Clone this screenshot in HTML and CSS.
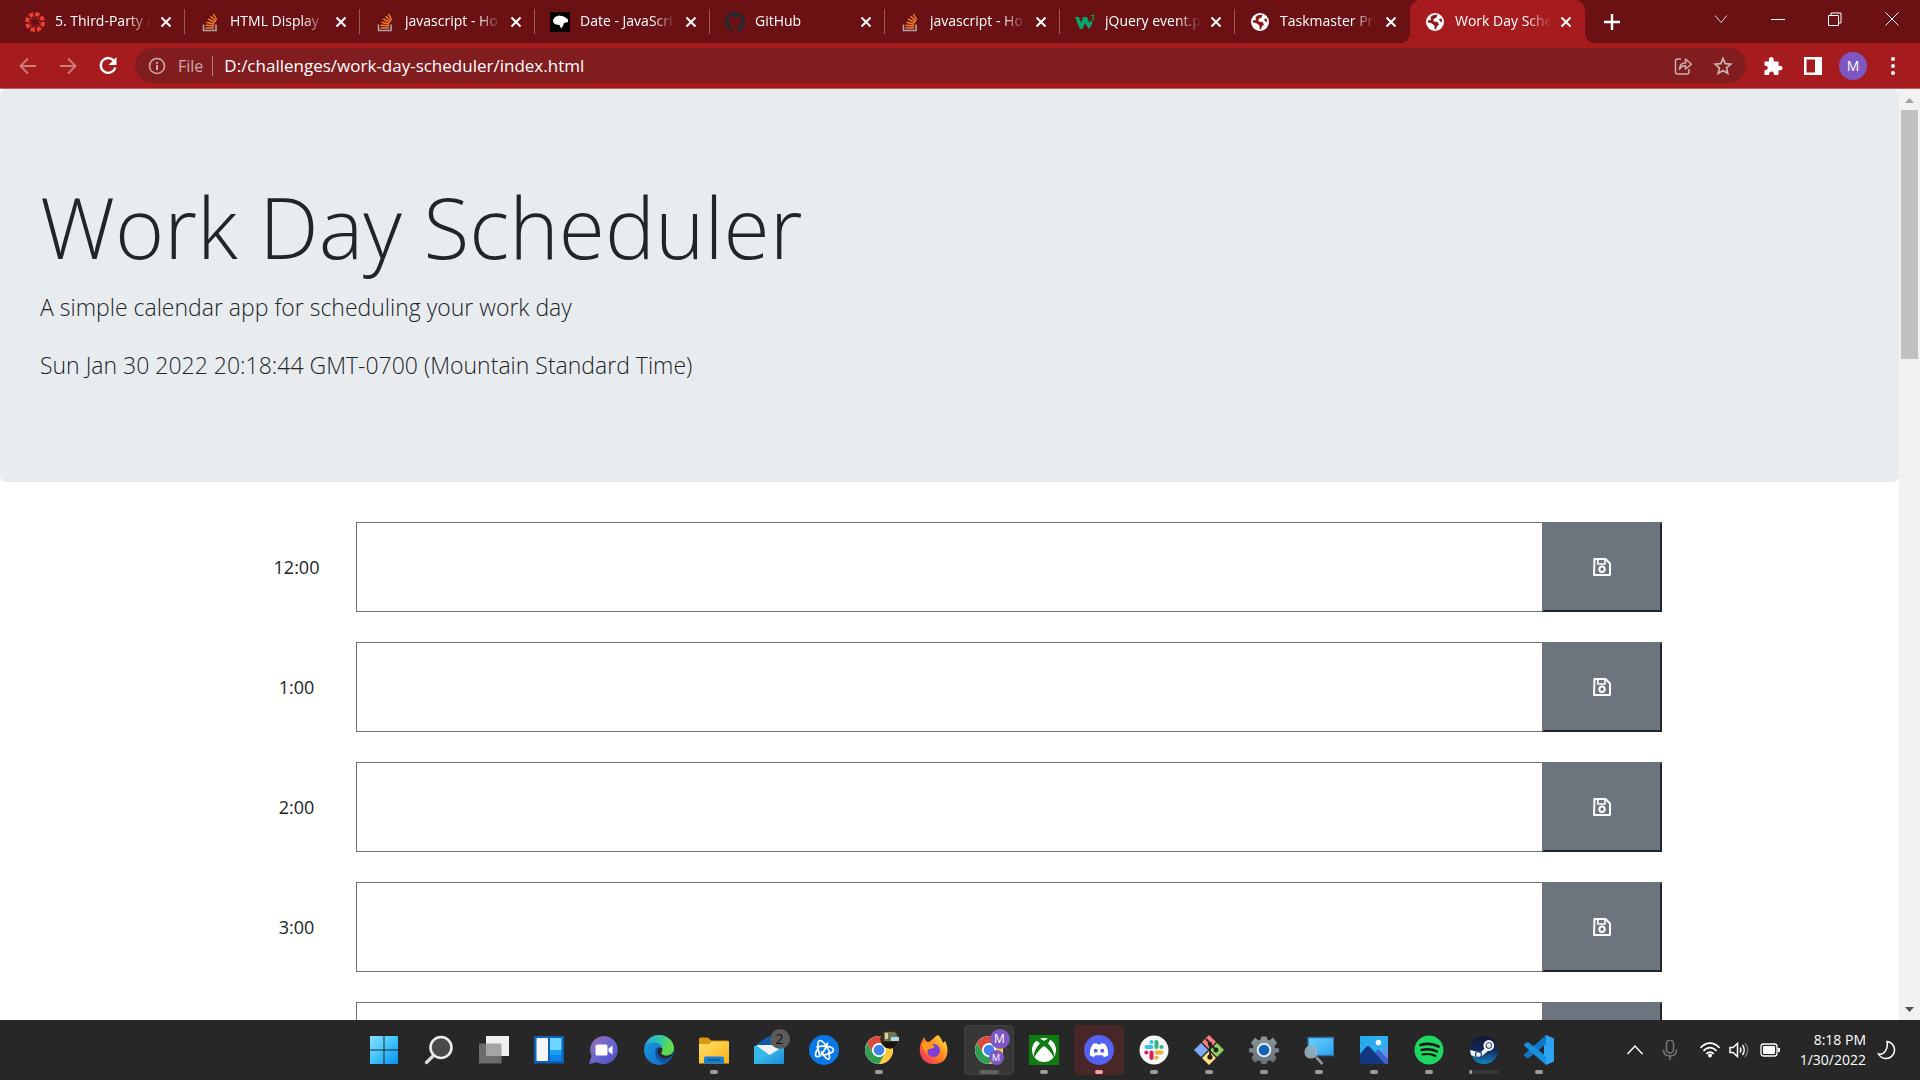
FILE: index.html
```html
<!DOCTYPE html>
<html lang="en">
<head>
<meta charset="utf-8">
<title>Work Day Scheduler</title>
<link rel="stylesheet" href="styles.css">
</head>
<body>
<svg class="defs" aria-hidden="true">
  <defs>
    <linearGradient id="winG" x1="0" y1="0" x2="1" y2="1"><stop offset="0" stop-color="#8ce0ff"/><stop offset=".5" stop-color="#3fc3fb"/><stop offset="1" stop-color="#0a8df5"/></linearGradient>
    <linearGradient id="chatG" x1="0" y1="0" x2="1" y2="1"><stop offset="0" stop-color="#a06cb4"/><stop offset=".5" stop-color="#6a67d0"/><stop offset="1" stop-color="#4a4fc0"/></linearGradient>
    <linearGradient id="edgeA" x1="0" y1="0" x2="1" y2="1"><stop offset="0" stop-color="#1c9de0"/><stop offset="1" stop-color="#0b65c2"/></linearGradient>
    <linearGradient id="edgeB" x1="0" y1="0" x2="1" y2="0"><stop offset="0" stop-color="#2aa9e0"/><stop offset=".5" stop-color="#2fc5a8"/><stop offset="1" stop-color="#6be04a"/></linearGradient>
    <linearGradient id="foldG" x1="0" y1="0" x2="1" y2="1"><stop offset="0" stop-color="#ffdc6e"/><stop offset="1" stop-color="#fbb512"/></linearGradient>
    <linearGradient id="mailG" x1="0" y1="0" x2="1" y2="1"><stop offset="0" stop-color="#50d4f5"/><stop offset="1" stop-color="#1a8ad8"/></linearGradient>
    <linearGradient id="foxG" x1="1" y1="0" x2="0" y2="1"><stop offset="0" stop-color="#fff04a"/><stop offset=".45" stop-color="#ff8a1e"/><stop offset="1" stop-color="#f0206a"/></linearGradient>
    <linearGradient id="steamG" x1="0" y1="0" x2="0" y2="1"><stop offset="0" stop-color="#14152e"/><stop offset=".5" stop-color="#12285a"/><stop offset="1" stop-color="#1288c4"/></linearGradient>
    <linearGradient id="monG" x1="0" y1="0" x2="1" y2="1"><stop offset="0" stop-color="#6cd0fb"/><stop offset="1" stop-color="#2aa2f4"/></linearGradient>
    <linearGradient id="picG" x1="0" y1="0" x2="1" y2="1"><stop offset="0" stop-color="#25a8ea"/><stop offset=".6" stop-color="#2fb0ee"/><stop offset="1" stop-color="#9a6ad8"/></linearGradient>
    <linearGradient id="gearG" x1="0" y1="0" x2="0" y2="1"><stop offset="0" stop-color="#8d959d"/><stop offset="1" stop-color="#646c74"/></linearGradient>
    <symbol id="x" viewBox="0 0 12 12"><path d="M1.500 1.500 10.500 10.500M10.500 1.500 1.500 10.500" stroke="#fff" stroke-width="2"/></symbol>
    <symbol id="so" viewBox="0 0 20 20"><path d="M3.500 12.500V18.500H16V12.500" fill="none" stroke="#a8a8ac" stroke-width="1.600"/><path d="M5.500 16H14M5.700 13.200 14 14M6.500 10.200 14.300 12.200M8.200 7 15 10.700M10.700 4.300 16 9.500M13.500 2 16.700 8" stroke="#f08030" stroke-width="1.500"/></symbol>
    <symbol id="globe" viewBox="0 0 20 20"><circle cx="10" cy="10" r="9" fill="#fff"/><path d="M8 3.200 12.500 2.500 11.500 5.500 8.500 7 8.500 9.500 12.500 10 14 12.500 12 14.500 10.800 17.500 9.500 17 9.500 13.500 6 11 3 10.500 2.700 8.500 6 8 5.500 5ZM14 7 16.500 6.500 17.300 10 15 9.500Z" fill="#8c1818"/></symbol>
    <symbol id="save" viewBox="0 0 18 18"><path d="M1.500 1H12.500L17 5.500V17H1Z" fill="none" stroke="#fff" stroke-width="2" stroke-linejoin="round"/><path d="M4.800 1.500V6H12V1.500" fill="none" stroke="#fff" stroke-width="1.600"/><circle cx="9" cy="11.300" r="2.700" fill="none" stroke="#fff" stroke-width="2"/></symbol>
    <symbol id="chrome" viewBox="0 0 30 30"><circle cx="15" cy="15" r="14" fill="#fff"/><path d="M2.900 8A14 14 0 0 1 27.100 8H15A7 7 0 0 0 9 18.500Z" fill="#dc4a3c"/><path d="M27.100 8A14 14 0 0 1 15 29L21 18.500A7 7 0 0 0 15 8Z" fill="#fcc934"/><path d="M15 29A14 14 0 0 1 2.900 8L9 18.500A7 7 0 0 0 21 18.500Z" fill="#2f9e51"/><circle cx="15" cy="15" r="6.700" fill="#fff"/><circle cx="15" cy="15" r="5.300" fill="#3f84ee"/></symbol>
  </defs>
</svg>

<header class="browser">
  <div class="tabstrip">
    <nav class="tabs" aria-label="Tabs">
      <div class="tab"><svg class="fav" viewBox="0 0 20 20"><circle cx="10" cy="10" r="8" fill="none" stroke="#ef3f30" stroke-width="4" stroke-dasharray="4.300 1.983"/><g fill="#ef3f30"><circle cx="10" cy="5.300" r=".8"/><circle cx="10" cy="14.700" r=".8"/><circle cx="5.300" cy="10" r=".8"/><circle cx="14.700" cy="10" r=".8"/><circle cx="6.700" cy="6.700" r=".8"/><circle cx="13.300" cy="13.300" r=".8"/><circle cx="6.700" cy="13.300" r=".8"/><circle cx="13.300" cy="6.700" r=".8"/></g></svg><a class="title" href="#">5. Third-Party A</a><button class="close" aria-label="Close tab"><svg><use href="#x"/></svg></button></div>
      <div class="tab"><svg class="fav"><use href="#so"/></svg><a class="title" href="#">HTML Display</a><button class="close" aria-label="Close tab"><svg><use href="#x"/></svg></button></div>
      <div class="tab"><svg class="fav"><use href="#so"/></svg><a class="title" href="#">javascript - Ho</a><button class="close" aria-label="Close tab"><svg><use href="#x"/></svg></button></div>
      <div class="tab"><svg class="fav" viewBox="0 0 20 20"><path d="M0 0H20V20H0Z"/><path d="M3 8 5 5 9 3.500 14 4.500 18 7.500V10L14 11 13 14 11 16.500 9.500 13 6 12.500 3.500 11Z" fill="#fff"/></svg><a class="title" href="#">Date - JavaScri</a><button class="close" aria-label="Close tab"><svg><use href="#x"/></svg></button></div>
      <div class="tab"><svg class="fav" viewBox="0 0 16 16"><path fill="#24292f" d="M8 0C3.580 0 0 3.580 0 8c0 3.540 2.290 6.530 5.470 7.590.4.070.55-.17.55-.38 0-.19-.01-.82-.01-1.490-2.010.37-2.530-.49-2.690-.94-.09-.23-.48-.94-.82-1.130-.28-.15-.68-.52-.01-.53.63-.01 1.080.58 1.230.82.72 1.210 1.870.87 2.330.66.070-.52.28-.87.51-1.070-1.780-.2-3.640-.89-3.640-3.950 0-.87.31-1.590.82-2.150-.08-.2-.36-1.020.08-2.120 0 0 .67-.21 2.200.82a7.600 7.600 0 0 1 4 0c1.530-1.040 2.200-.82 2.200-.82.44 1.100.16 1.920.08 2.120.51.56.82 1.270.82 2.150 0 3.070-1.870 3.750-3.650 3.950.29.25.54.73.54 1.480 0 1.070-.01 1.930-.01 2.200 0 .21.15.46.55.38A8 8 0 0 0 16 8c0-4.420-3.580-8-8-8z"/></svg><a class="title" href="#">GitHub</a><button class="close" aria-label="Close tab"><svg><use href="#x"/></svg></button></div>
      <div class="tab"><svg class="fav"><use href="#so"/></svg><a class="title" href="#">javascript - Ho</a><button class="close" aria-label="Close tab"><svg><use href="#x"/></svg></button></div>
      <div class="tab"><svg class="fav" viewBox="0 0 20 20"><path d="M0 5H4L6 11 8 5H12L14.500 11 16 8.500 17.500 11 14 17 10 11 7.500 17H5Z" fill="#04aa6d"/><path d="M16 3.500H19L17.500 5.300Q19.300 5.500 19 7.200 17.700 9 16 7.500" fill="none" stroke="#04aa6d"/></svg><a class="title" href="#">jQuery event.p</a><button class="close" aria-label="Close tab"><svg><use href="#x"/></svg></button></div>
      <div class="tab"><svg class="fav"><use href="#globe"/></svg><a class="title" href="#">Taskmaster Pro</a><button class="close" aria-label="Close tab"><svg><use href="#x"/></svg></button></div>
      <div class="tab active"><svg class="fav"><use href="#globe"/></svg><a class="title" href="#" aria-current="page">Work Day Sche</a><button class="close" aria-label="Close tab"><svg><use href="#x"/></svg></button></div>
    </nav>
    <button class="newtab" aria-label="New tab"><svg width="16" height="16" viewBox="0 0 16 16"><path d="M8 0V16M0 8H16" stroke="#fff" stroke-width="2.400"/></svg></button>
    <div class="winctl">
      <button aria-label="Search tabs"><svg viewBox="0 0 14 14"><path d="M1 3.500 7 10.500 13 3.500" fill="none" stroke="#fff" stroke-width="1" opacity=".8"/></svg></button>
      <button aria-label="Minimize"><svg viewBox="0 0 14 14"><path d="M0 7.500H14" stroke="#fff"/></svg></button>
      <button aria-label="Restore"><svg viewBox="0 0 14 14"><path d="M.5 3.500H10.500V13.500H.5ZM3 3V1H13V11H11" fill="none" stroke="#fff"/></svg></button>
      <button aria-label="Close"><svg viewBox="0 0 14 14"><path d="M.5 .5 13.500 13.500M13.500 .5 .5 13.500" stroke="#fff"/></svg></button>
    </div>
  </div>
  <div class="toolbar">
    <button class="tool dim" aria-label="Back"><svg viewBox="0 0 20 20"><path d="M18 10H3M10 2.500 2.500 10 10 17.500" fill="none" stroke="currentColor" stroke-width="1.800"/></svg></button>
    <button class="tool dim" aria-label="Forward"><svg viewBox="0 0 20 20"><path d="M2 10H17M10 2.500 17.500 10 10 17.500" fill="none" stroke="currentColor" stroke-width="1.800"/></svg></button>
    <button class="tool" aria-label="Reload"><svg viewBox="0 0 20 20"><path d="M16.500 5.500A7.400 7.400 0 1 0 17.300 11.500" fill="none" stroke="#fff" stroke-width="2.300"/><path d="M18.500 1V9H10.500Z" fill="#fff"/></svg></button>
    <div class="omnibox">
      <svg class="info" viewBox="0 0 18 18"><circle cx="9" cy="9" r="7.500" fill="none" stroke="currentColor" stroke-width="1.600"/><path d="M9 8V13M9 5V6.800" stroke="currentColor" stroke-width="2"/></svg>
      <label class="scheme" for="url">File</label>
      <input id="url" class="url" type="text" value="D:/challenges/work-day-scheduler/index.html">
      <button class="tool soft" aria-label="Share"><svg viewBox="0 0 20 20"><path d="M8 3H4.500Q2.500 3 2.500 5V16Q2.500 18 4.500 18H14Q16 18 16 16V13M6.500 13.500C6.500 8.500 9 7 12.500 7V3L18.500 8.200 12.500 13V9.700C9.500 9.700 7.500 11 6.500 13.500Z" fill="none" stroke="currentColor" stroke-width="1.500" stroke-linejoin="round"/></svg></button>
      <button class="tool soft" aria-label="Bookmark"><svg viewBox="0 0 20 20"><path d="M10 2.500 12.200 7.700 17.800 8.200 13.600 11.900 14.800 17.400 10 14.500 5.200 17.400 6.400 11.900 2.200 8.200 7.800 7.700Z" fill="none" stroke="currentColor" stroke-width="1.700"/></svg></button>
    </div>
    <button class="tool" aria-label="Extensions"><svg viewBox="0 0 20 20"><path d="M1.500 5.500H6Q5.300 1 8.300 1 11.300 1 10.600 5.500H15.500V9.800Q19.500 9.200 19.500 12 19.500 14.800 15.500 14.200V19H11Q11 15.500 8.500 15.500 6 15.500 6 19H1.500V14.300Q4.800 14 4.800 12 4.800 9.800 1.500 9.600Z" fill="#fff"/></svg></button>
    <button class="tool" aria-label="Side panel"><svg viewBox="0 0 20 20"><path d="M1 1H19V19H1ZM3.500 3.500V16.500H12V3.500Z" fill="#fff" fill-rule="evenodd"/></svg></button>
    <button class="tool" aria-label="Profile"><span class="avatar">M</span></button>
    <button class="tool" aria-label="Menu"><svg viewBox="0 0 20 20" fill="#fff"><circle cx="10" cy="3" r="2"/><circle cx="10" cy="10" r="2"/><circle cx="10" cy="17" r="2"/></svg></button>
  </div>
</header>

<div class="viewport">
  <main class="page">
    <section class="jumbotron">
      <h1>Work Day Scheduler</h1>
      <p>A simple calendar app for scheduling your work day</p>
      <p>Sun Jan 30 2022 20:18:44 GMT-0700 (Mountain Standard Time)</p>
    </section>
    <div class="container">
      <div class="row"><label for="h12">12:00</label><textarea id="h12"></textarea><button class="save" aria-label="Save"><svg><use href="#save"/></svg></button></div>
      <div class="row"><label for="h1">1:00</label><textarea id="h1"></textarea><button class="save" aria-label="Save"><svg><use href="#save"/></svg></button></div>
      <div class="row"><label for="h2">2:00</label><textarea id="h2"></textarea><button class="save" aria-label="Save"><svg><use href="#save"/></svg></button></div>
      <div class="row"><label for="h3">3:00</label><textarea id="h3"></textarea><button class="save" aria-label="Save"><svg><use href="#save"/></svg></button></div>
      <div class="row"><label for="h4">4:00</label><textarea id="h4"></textarea><button class="save" aria-label="Save"><svg><use href="#save"/></svg></button></div>
    </div>
  </main>
  <div class="scrollbar" aria-hidden="true">
    <svg viewBox="0 0 21 21"><path d="M6 14 10.500 9 15 14Z" fill="#a3a3a3"/></svg>
    <div class="track"><div class="thumb"></div></div>
    <svg viewBox="0 0 21 21"><path d="M6 8 10.500 13 15 8Z" fill="#505050"/></svg>
  </div>
</div>

<footer class="taskbar">
  <div class="apps">
    <button class="app" aria-label="Start"><svg viewBox="0 0 30 30"><path d="M1 1H14.500V14.500H1ZM15.500 1H29V14.500H15.500ZM1 15.500H14.500V29H1ZM15.500 15.500H29V29H15.500Z" fill="url(#winG)"/></svg></button>
    <button class="app" aria-label="Search"><svg viewBox="0 0 30 30"><path d="M9.500 20.500 2.500 27.500" stroke="#ddd" stroke-width="3.200" stroke-linecap="round"/><circle cx="17" cy="12.500" r="10.500" fill="#4a4a4a" stroke="#ececec" stroke-width="2.600"/></svg></button>
    <button class="app" aria-label="Task view"><svg viewBox="0 0 30 30"><path d="M7 1H30V21H7Z" fill="#f0f0f0"/><path d="M0 8.500H22.500V28.500H0Z" fill="#888" opacity=".72"/></svg></button>
    <button class="app" aria-label="Widgets"><svg viewBox="0 0 30 30"><path d="M0 1H30V28.500H0Z" fill="#0b62b8"/><rect x="2.500" y="3" width="11.500" height="23" rx="1" fill="#f5f5f5"/><path d="M16 3H27.500V15H16Z" fill="#6cd6ff"/><path d="M16 15H27.500V20.500H16Z" fill="#1aa0f5"/><path d="M16 20.500H27.500V26H16Z" fill="#0c84ea"/></svg></button>
    <button class="app" aria-label="Chat"><svg viewBox="0 0 30 30"><path d="M15 1A14 14 0 1 1 8 27.200L0 29 2.500 21A14 14 0 0 1 15 1Z" fill="url(#chatG)"/><rect x="6.500" y="9.500" width="12" height="11" rx="1.500" fill="#fff"/><path d="M19.500 13.500 23.500 10.500V19.500L19.500 16.500Z" fill="#fff"/></svg></button>
    <button class="app" aria-label="Edge"><svg viewBox="0 0 30 30"><circle cx="15" cy="15" r="15" fill="url(#edgeA)"/><path d="M1 10C4 3 9 0 15 0 23 0 30 6 30 13 30 18 26.500 20.500 22.500 20.500 19.500 20.500 17.500 19.500 17.500 18 17.500 17 19 16 18.500 13.500 18 10 14 7.500 9.500 7.500 5 7.500 2 9 1 10Z" fill="url(#edgeB)"/><path d="M13 12C9 16 12 28 21 28 24 27 27 24 28 22 22 26 13.500 22 13 12Z" fill="#114f9f"/><path d="M14.500 12.500C12 15 13.500 21 19 23 23 24 26 23 28.500 20.500L30 15 22.500 20.500C19.500 20.500 17.500 19.500 17.500 18 18.500 17 19 15 18 13Z" fill="#272727"/><path d="M18 12C20 14 17.500 16.500 17.500 18 17.500 19.500 19.500 20.500 22.500 20.500 26.500 20.500 30 18 30 13L25 8Z" fill="#5dd852"/></svg></button>
    <button class="app open" aria-label="File Explorer"><svg viewBox="0 0 30 30"><path d="M0 4.500Q0 2.500 1.500 2.500H9L12 5.500H28Q30 5.500 30 7V12H0Z" fill="#d9990c"/><path d="M0 9H10L12.500 6.500H30V28.500H0Z" fill="url(#foldG)"/><path d="M5 28.500V23Q5 21.500 6.500 21.500H23.500Q25 21.500 25 23V28.500Z" fill="#1580d4"/><path d="M9 25H21" stroke="#0b4f93" stroke-width="1.500"/></svg></button>
    <button class="app" aria-label="Mail, 2 new"><svg viewBox="0 0 30 30"><path d="M0 11 15 1 30 11V29H0Z" fill="#0e5ba6"/><path d="M3 10H27V20H3Z" fill="#f2f2f2"/><path d="M0 11 15 20.500 30 11V29H0Z" fill="url(#mailG)"/><path d="M0 29 15 19.500 3 11 0 11Z" fill="#34b8ea"/></svg><span class="badge count">2</span></button>
    <button class="app" aria-label="Battle.net"><svg viewBox="0 0 30 30"><circle cx="15" cy="15" r="15" fill="#0a78e6"/><g fill="none" stroke="#fff" stroke-width="1.700" stroke-linecap="round"><path d="M11 21C8 13 8.500 5.500 11 5.500 14 5.500 18.500 12 21 18"/><path d="M8 12C14 10 24.500 11.500 24.500 15 24.500 17.500 19 19.500 14 20"/><path d="M18.500 8C16.500 15 11 23 7.500 21.500 5.500 20.500 6.500 17 9 13.500"/><path d="M12.500 17C15.500 22 18.500 25 20 24 21 23 20.500 20.500 19.500 18"/></g></svg></button>
    <button class="app open" aria-label="Chrome"><svg><use href="#chrome"/></svg><svg class="badge photo" viewBox="0 0 20 20"><circle cx="10" cy="10" r="10" fill="#34301f"/><path d="M4 3H15L18 8V12H4Z" fill="#6d7451"/><path d="M11 8H19V12H11Z" fill="#a8dcf0"/><path d="M5 4H8V10H5Z" fill="#d8cfa0"/><path d="M2 13H18L14 19H6Z" fill="#1d130d"/></svg></button>
    <button class="app" aria-label="Firefox"><svg viewBox="0 0 30 30"><path d="M19 0C22 3 23 5 24 8L26 6C30 12 31 29 15 29 -1 29 -1 12 3 6L5 2C6 5 7 6 9 7 13 6 15 2 19 0Z" fill="url(#foxG)"/><circle cx="14.500" cy="15.500" r="6.500" fill="#7a3fd6"/><path d="M3 8C7 6 13 8 15 11 17 13 12 14 10 14 8 15 8 17 9 20 5 17 4 12 3 8Z" fill="#ff9a1c"/></svg></button>
    <button class="app active" aria-label="Chrome, profile M"><svg><use href="#chrome"/></svg><span class="badge profile">M</span><span class="badge small">M</span></button>
    <button class="app open" aria-label="Xbox"><svg viewBox="0 0 30 30"><path d="M0 0H30V30H0Z" fill="#107c10"/><circle cx="15" cy="15" r="12" fill="#fff"/><path d="M8 3.500C11 3 14 5 15 6 16 5 19 3 22 3.500L19 8.500C23 12 26 19 25 22.500 22 17 18 13 15 11 12 13 8 17 5 22.500 4 19 7 12 11 8.500 9 6.500 7.500 5.500 5.500 6Z" fill="#107c10"/></svg></button>
    <button class="app open alert" aria-label="Discord"><svg viewBox="0 0 30 30"><circle cx="15" cy="15" r="15" fill="#5562f0"/><path d="M9 9 12.500 8 13.200 9.300H16.800L17.500 8 21 9C24 13 24.500 17 24 20.500L20 22.300 18.700 20.300H11.300L10 22.300 6 20.500C5.500 17 6 13 9 9Z" fill="#fff"/><circle cx="11.700" cy="15.800" r="2" fill="#5562f0"/><circle cx="18.300" cy="15.800" r="2" fill="#5562f0"/></svg></button>
    <button class="app open" aria-label="Slack"><svg viewBox="0 0 30 30"><circle cx="15" cy="15" r="14.500" fill="#f7f7f7"/><g stroke-width="4" stroke-linecap="round"><path d="M12.500 7V7M7.500 12H12.500" stroke="#36c5f0"/><path d="M17.500 7V12M22.500 12V12" stroke="#2eb67d"/><path d="M17.500 17.500H22.500M17.500 22.700V22.700" stroke="#ecb22e"/><path d="M12.500 17.500V23M7.300 17.500V17.500" stroke="#e01e5a"/></g></svg></button>
    <button class="app open" aria-label="Git GUI"><svg viewBox="0 0 30 30"><path d="M15 0 22 7 15 14 8 7Z" fill="#f77c7c"/><path d="M7 8 14 15 7 22 0 15Z" fill="#7eaaf8"/><path d="M23 8 30 15 23 22 16 15Z" fill="#8bd05e"/><path d="M15 16 22 23 15 30 8 23Z" fill="#ffe083"/><path d="M12 4 16 8V23M16 9 22 15" fill="none" stroke="#272020" stroke-width="1.800"/><circle cx="16" cy="9" r="2.200" fill="#272020"/><circle cx="22" cy="15" r="2.400" fill="#272020"/><circle cx="16" cy="22" r="2.600" fill="#272020"/></svg></button>
    <button class="app open" aria-label="Settings"><svg viewBox="0 0 30 30"><path d="M11.500 4.500 12.500 1.500H17.500L18.500 4.500 20.500 5.500 24 2.500 28 8 25.500 11.500 26 13 30 13.500V17L26 18 25.500 19.500 27.500 23 24.500 27.500 20.500 25.500 18.500 26.500 17.500 29H12.500L11.500 26.500 9.500 25.500 5.500 27.500 2.500 23 4.500 19.500 4 18 0 17V13.500L4 13 4.500 11.500 2 8 6 2.500 9.500 5.500Z" fill="url(#gearG)"/><circle cx="15" cy="15" r="6.300" fill="#0f66b8" stroke="#e6ebf0" stroke-width="2"/></svg></button>
    <button class="app open" aria-label="Remote viewer"><svg viewBox="0 0 30 30"><path d="M4 2.500H30V20.500H4Z" fill="url(#monG)" stroke="#2f6fa0" stroke-width="1.600"/><path d="M12 22 18.500 29" stroke="#8796a2" stroke-width="2.600"/><circle cx="7" cy="17" r="6" fill="#8fabbd" opacity=".92" stroke="#a8b0b6" stroke-width="1.200"/></svg></button>
    <button class="app open" aria-label="Photos"><svg viewBox="0 0 30 30"><path d="M1 1H29V29H1Z" fill="url(#picG)"/><path d="M13 22 19 14 29 24V29H13Z" fill="#3f62cc"/><path d="M1 19 7 12Q9 10 11 12L26 29H1Z" fill="#12397e"/><circle cx="19.500" cy="7.500" r="2.700" fill="#fff"/></svg></button>
    <button class="app open" aria-label="Spotify"><svg viewBox="0 0 30 30"><circle cx="15" cy="15" r="14.500" fill="#1ed760"/><g fill="none" stroke="#151515" stroke-linecap="round"><path d="M6.500 10C12 8.300 19 8.800 24.500 11.500" stroke-width="2.800"/><path d="M7.500 15C13 13.500 18 14 23 16.500" stroke-width="2.400"/><path d="M8.500 19.500C13 18.500 17.500 18.800 21.500 21" stroke-width="2"/></g></svg></button>
    <button class="app loading" aria-label="Steam"><svg viewBox="0 0 30 30"><circle cx="15" cy="15" r="14" fill="url(#steamG)"/><path d="M1 15 7 16.500 11 18 17 12 19 16 13 21 9 23 2 20Z" fill="#f4f6fa"/><circle cx="19.800" cy="10.500" r="4.300" fill="#1a2a55" stroke="#f4f6fa" stroke-width="2.200"/><circle cx="19.800" cy="10.500" r="2.400" fill="#dfe4ee"/><circle cx="9.500" cy="19.500" r="3" fill="none" stroke="#1d4478" stroke-width="1.200"/></svg></button>
    <button class="app open" aria-label="Visual Studio Code"><svg viewBox="0 0 30 30"><path d="M22 0 30 3.500V26.500L22 30 20 21V9Z" fill="#2da3f3"/><path d="M22 0V9L4 23.500 0 21V19.500Z" fill="#0f78c4"/><path d="M22 30V21L4 7 0 9V10.500Z" fill="#1a8fdd"/></svg></button>
  </div>
  <div class="tray">
    <button class="caret" aria-label="Hidden icons"><svg viewBox="0 0 20 20"><path d="M2.500 14 10 6 17.500 14" fill="none" stroke="#fff" stroke-width="1.500"/></svg></button>
    <svg class="mic" viewBox="0 0 20 20"><rect x="6.500" y="0" width="7" height="13" rx="3.500" fill="none" stroke="#777" stroke-width="1.500"/><path d="M3.500 9.500Q3.500 16 10 16 16.500 16 16.500 9.500M10 16V20" fill="none" stroke="#777" stroke-width="1.500"/></svg>
    <svg class="wifi" viewBox="0 0 20 20"><g fill="none" stroke="#fff" stroke-width="1.600"><path d="M.5 8C6 1.500 14 1.500 19.500 8M3.500 11C7.500 6.500 12.500 6.500 16.500 11M6.300 14C8.500 11.500 11.500 11.500 13.700 14"/></g><circle cx="10" cy="15.500" r="1.900" fill="#fff"/></svg>
    <svg class="vol" viewBox="0 0 20 20"><path d="M1 7.500H4L8.500 3.500V16.500L4 12.500H1Z" fill="none" stroke="#fff" stroke-width="1.500"/><path d="M11 7.500Q13 10 11 12.500M13.500 5Q17 10 13.500 15" fill="none" stroke="#fff" stroke-width="1.400"/><path d="M16 3Q21.500 10 16 17" fill="none" stroke="#777" stroke-width="1.400"/></svg>
    <svg class="bat" viewBox="0 0 20 20"><rect x="1" y="4" width="16" height="12" rx="2.500" fill="none" stroke="#fff" stroke-width="1.300"/><rect x="3" y="6" width="12" height="8" rx="1" fill="#fff"/><path d="M18 8H20V12H18Z" fill="#fff"/></svg>
    <div class="clock"><time>8:18 PM</time><time>1/30/2022</time></div>
    <svg class="moon" viewBox="0 0 20 20"><path d="M11 1.500A8.500 8.500 0 1 1 2.500 14C8 15.500 12.500 9 11 1.500Z" fill="none" stroke="#fff" stroke-width="1.500"/></svg>
  </div>
</footer>
</body>
</html>
```
FILE: styles.css
```css
* { box-sizing: border-box; }

body {
  margin: 0;
  height: 100vh;
  display: flex;
  flex-direction: column;
  overflow: hidden;
  background: #fff;
  color: #212529;
  font-family: "Open Sans", "Noto Sans", sans-serif;
}

button {
  border: 0;
  padding: 0;
  background: none;
  color: inherit;
  font: inherit;
}

button,
.toolbar svg { display: flex; align-items: center; justify-content: center; }

a { color: inherit; text-decoration: none; }

.defs { position: absolute; width: 0; height: 0; }

/* Browser frame */
.browser { flex: none; color: #fff; background: #a61c1e; border-bottom: 1px solid #c06062; }

.tabstrip { display: flex; height: 43px; padding-left: 10px; background: #6b1113; }
.tabs { display: flex; }

.tab {
  display: flex;
  align-items: center;
  width: 175px;
  padding: 0 9px 0 15px;
  background: linear-gradient(#9b5a5b, #9b5a5b) right center / 1px 25px no-repeat;
}
.tab:nth-last-child(2) { background: none; }
.tab.active { position: relative; background: #a61c1e; border-radius: 10px 10px 0 0; }
.tab.active::before,
.tab.active::after {
  content: "";
  position: absolute;
  bottom: 0;
  width: 10px;
  height: 10px;
}
.tab.active::before { right: 100%; background: radial-gradient(circle at 0 0, transparent 10px, #a61c1e 10px); }
.tab.active::after { left: 100%; background: radial-gradient(circle at 100% 0, transparent 10px, #a61c1e 10px); }

.fav { flex: none; width: 20px; height: 20px; }

.title {
  flex: 1;
  min-width: 0;
  margin: 0 0 0 10px;
  padding-bottom: 1px;
  overflow: hidden;
  white-space: nowrap;
  font-size: 14px;
  line-height: 20px;
  mask-image: linear-gradient(to right, #000 72px, transparent 96px);
}

.close { flex: none; width: 20px; height: 20px; }
.close svg { width: 12px; height: 12px; }

.newtab { width: 54px; }

.winctl { display: flex; height: 37px; margin-left: auto; }
.winctl button { width: 57px; }
.winctl svg { width: 14px; height: 14px; }

.toolbar { display: flex; align-items: center; height: 45px; padding: 0 7px 0 8px; }
.tool { flex: none; width: 40px; height: 35px; }
.tool svg { width: 20px; height: 20px; }
.dim { color: #cf7c7d; }
.soft { color: #cbb0b0; }

.omnibox {
  flex: 1;
  display: flex;
  align-items: center;
  height: 35px;
  margin: 0 7px;
  padding: 0 3px 0 13px;
  border-radius: 18px;
  background: #821d1f;
}
.info { width: 18px; height: 18px; color: #c9acac; }
.scheme { margin-left: 12px; padding-right: 9px; border-right: 1px solid #b17c7d; color: #c9acac; font-size: 16px; line-height: 20px; }
.url { flex: 1; margin-left: 11px; padding: 0; border: 0; outline: 0; background: none; color: #fff; font: 17px/22px "Open Sans", "Noto Sans", sans-serif; }

.avatar { width: 28px; height: 28px; border-radius: 50%; background: #7e57c2; font-size: 14px; line-height: 28px; }

/* Page */
.viewport { flex: 1; min-height: 0; display: flex; }
.page { flex: 1; overflow: hidden; }

.jumbotron { margin-bottom: 40px; padding: 80px 40px 78px; border-radius: 6px; background: #e9ecef; font-weight: 300; }
.jumbotron h1 { margin: 0 0 3px; font-size: 84px; font-weight: 300; line-height: 116px; }
.jumbotron p { margin: 0 0 20px; font-size: 23px; line-height: 38px; }

.container { max-width: 1425px; margin: 0 auto; }
.row { display: grid; grid-template-columns: 119px 1fr 120px; height: 90px; margin-bottom: 30px; }
.row label { align-self: center; text-align: center; font-size: 18px; line-height: 30px; }
.row textarea { margin: 0; border: 1px solid #6c757d; border-right: 0; resize: none; background: #fff; }
.save { border: 2px solid; border-color: #6c757d #212529 #212529 #6c757d; background: #6c757d; }
.save svg { width: 18px; height: 18px; }

.scrollbar { display: flex; flex-direction: column; width: 21px; background: #f1f1f1; }
.scrollbar svg { flex: none; height: 21px; }
.track { flex: 1; padding: 0 2px; }
.thumb { height: 28%; background: #c1c1c1; }

/* Taskbar */
.taskbar {
  flex: none;
  display: grid;
  grid-template-columns: 1fr auto 1fr;
  align-items: center;
  height: 60px;
  background: #272727;
  color: #fff;
}
.apps { grid-column: 2; display: flex; gap: 5px; padding-left: 2px; }
.app { position: relative; width: 50px; height: 50px; border-radius: 5px; }
.app > svg { width: 30px; height: 30px; }
.app.active { background: #373737; box-shadow: inset 0 0 0 1px #424242; }
.app.alert { background: #472728; }

.app.open::after,
.app.active::after,
.app.loading::after {
  content: "";
  position: absolute;
  bottom: 1px;
  left: 50%;
  width: 8px;
  height: 4px;
  margin-left: -4px;
  border-radius: 2px;
  background: #9d9d9d;
}
.app.active::after { width: 20px; margin-left: -10px; background: #606060; }
.app.alert::after { background: #ff99a4; }
.app.loading::after { width: 30px; margin-left: -15px; background: linear-gradient(to right, #9d9d9d 3px, #363636 3px); }

.app .badge { position: absolute; top: 4px; right: 4px; width: 20px; height: 20px; border-radius: 50%; text-align: center; }
.badge.count { background: #5c5c5c; color: #111; font-size: 14px; line-height: 20px; }
.badge.profile { background: #7e57c2; font-size: 12px; line-height: 20px; }
.app .badge.small { top: 25px; right: 10px; width: 15px; height: 15px; background: #7e57c2; font-size: 9px; line-height: 15px; }

.tray { display: flex; align-items: center; justify-content: flex-end; padding-right: 24px; }
.tray svg { flex: none; width: 20px; height: 20px; }
.tray .mic { margin: 0 20px 0 15px; }
.caret { width: 20px; }
.tray .vol { margin: 0 11px 0 9px; }
.clock { display: flex; flex-direction: column; width: 86px; text-align: right; font-size: 14px; line-height: 20px; }
.moon { margin-left: 10px; }
```
